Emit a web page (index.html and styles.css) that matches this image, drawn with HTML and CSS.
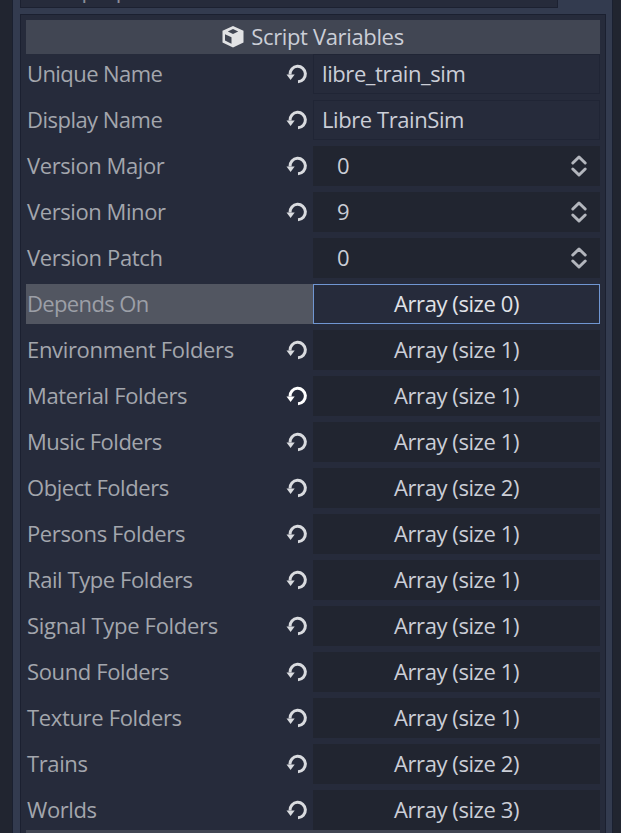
FILE: index.html
```
<!DOCTYPE html>
<html lang="en">
<head>
<meta charset="utf-8">
<title>Inspector</title>
<link rel="stylesheet" href="styles.css">
</head>
<body>
<svg width="0" height="0" class="defs">
  <symbol id="reset" viewBox="0 0 22 22">
    <path d="M4 11.500A7.700 7.700 0 1 1 12 18.700" fill="none" stroke="currentColor" stroke-width="3"/>
    <path d="M.5 11.500H8.700L4.600 17Z" fill="currentColor"/>
  </symbol>
  <symbol id="spin" viewBox="0 0 18 24">
    <path d="M2.800 9L9 3L15.200 9M2.800 15L9 21L15.200 15" fill="none" stroke="currentColor" stroke-width="3" stroke-linecap="round" stroke-linejoin="round"/>
  </symbol>
</svg>
<main class="dock">
  <div class="search">Filter properties</div>
  <section class="inspector">
    <header class="category">
      <svg class="cube" viewBox="0 0 22 22"><path fill-rule="evenodd" fill="currentColor" d="M11 0L21.500 4.800V16.500L11 21.500L.5 16.500V4.800ZM11 3L5.800 5.500L11 8L16.200 5.500ZM3 8.200V14.600L9.500 17.700V11.200Z"/></svg>
      <span>Script Variables</span>
    </header>
    <div class="rows" id="rows"></div>
    <div class="category next"></div>
  </section>
</main>
<script src="rows.js"></script>
</body>
</html>
```
FILE: styles.css
```
* { box-sizing: border-box; }
body {
  margin: 0;
  height: 833px;
  overflow: hidden;
  background: #212530;
  padding: 0 8px 0 12px;
  font: 22px/30px "Open Sans", "Noto Sans", sans-serif;
  font-kerning: none;
  letter-spacing: -.42px;
  color: #cbced7;
}
.defs { position: absolute; }
.dock {
  width: 601px;
  height: 833px;
  background: #333b4f;
  border: solid #1a2030;
  border-width: 0 1px;
  padding: 0 6px 0 7px;
  overflow: hidden;
}
.search {
  width: 538px;
  height: 8px;
  background: #262b3b;
  border: 1px solid #1c2131;
  border-top: 0;
  display: flex;
  align-items: flex-end;
  padding: 0 0 5px 6px;
  line-height: 26px;
  color: #8b8f99;
  overflow: hidden;
}
.inspector {
  margin-top: 6px;
  height: 830px;
  border: 1px solid #1b2030;
  background: #262b3b;
  padding: 5px;
}
.category {
  height: 34px;
  background: #414653;
  display: flex;
  align-items: center;
  justify-content: center;
  gap: 7px;
}
.category span { letter-spacing: -.35px; }
.cube { width: 22px; height: 22px; color: #e2e3e5; }
.category span, .name span, .value span { margin-top: -2px; }
.rows { display: grid; gap: 6px; }
.row { display: flex; height: 40px; }
.name {
  width: 287px;
  display: flex;
  align-items: center;
  justify-content: space-between;
  padding: 0 5px 0 1px;
  color: #a3a6ad;
}
.reset { width: 22px; height: 22px; color: #d9dbdf; }
.bright { color: #fff; }
.value {
  flex: 1;
  display: flex;
  align-items: center;
  justify-content: center;
  background: #212530;
}
.text { justify-content: flex-start; padding-left: 8px; background: #262b3b; border: 1px solid #202535; }
.number { justify-content: space-between; padding: 0 12px 0 24px; }
.spin { width: 18px; height: 24px; color: #b3b6bd; }
.selected .name { background: #525661; color: #9c9fa7; }
.selected .value { background: #262b3b; border: 1px solid #7096d2; color: #e0e2e8; }
```
FILE: rows.js
```
const properties = [
  ["Unique Name", -.58, "libre_train_sim", "text"],
  ["Display Name", -.52, "Libre TrainSim", "text"],
  ["Version Major", -.42, "0", "number"],
  ["Version Minor", -.42, "9", "number"],
  ["Version Patch", -.36, "0", "number", "default"],
  ["Depends On", -.64, 0, "array", "selected"],
  ["Environment Folders", -.33, 1, "array"],
  ["Material Folders", -.34, 1, "array", "hover"],
  ["Music Folders", -.48, 1, "array"],
  ["Object Folders", -.45, 2, "array"],
  ["Persons Folders", -.36, 1, "array"],
  ["Rail Type Folders", -.42, 1, "array"],
  ["Signal Type Folders", -.3, 1, "array"],
  ["Sound Folders", -.38, 1, "array"],
  ["Texture Folders", -.34, 1, "array"],
  ["Trains", -.4, 2, "array"],
  ["Worlds", -.4, 3, "array"]
];
document.getElementById("rows").innerHTML = properties.map(([name, tracking, value, type, state = ""]) => {
  const changed = state !== "default" && state !== "selected";
  const reset = changed ? `<svg class="reset ${state === "hover" ? "bright" : ""}"><use href="#reset"/></svg>` : "";
  const spin = type === "number" ? '<svg class="spin"><use href="#spin"/></svg>' : "";
  const shown = type === "array" ? `Array (size ${value})` : value;
  return `<div class="row ${state}"><div class="name"><span style="letter-spacing:${tracking}px">${name}</span>${reset}</div><div class="value ${type}"><span>${shown}</span>${spin}</div></div>`;
}).join("");
```
